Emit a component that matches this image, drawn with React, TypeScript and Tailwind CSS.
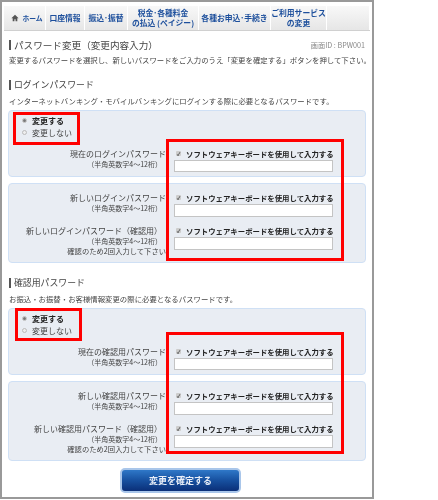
import React from "react";

const navItems = [
  { label: ["ホーム"], width: "w-[42px]", home: true },
  { label: ["口座情報"], width: "w-[39px]" },
  { label: ["振込･振替"], width: "w-[43px]" },
  { label: ["税金･各種料金", "の払込 (ペイジー)"], width: "w-[71px]" },
  { label: ["各種お申込･手続き"], width: "w-[72px]" },
  { label: ["ご利用サービス", "の変更"], width: "w-[56px]" },
  { label: [], width: "flex-1" },
];

function Heading({ children, large }: { children: React.ReactNode; large?: boolean }) {
  return (
    <div
      className={`ml-[1px] h-[10px] border-l-2 border-[#555] pl-[3px] leading-[10px] whitespace-nowrap text-[#444] ${
        large ? "text-[9.6px]" : "text-[8.9px]"
      }`}
    >
      {children}
    </div>
  );
}

function Description({ children, className }: { children: React.ReactNode; className: string }) {
  return (
    <p className={`ml-[1px] h-[10px] text-[7.4px] leading-[10px] whitespace-nowrap text-[#444] ${className}`}>
      {children}
    </p>
  );
}

function Radios() {
  return (
    <div className="flex flex-col gap-[3px] pl-[13px]">
      <label className="flex h-[9px] items-center gap-[5px] text-[8px] font-bold leading-[9px] text-[#222]">
        <span className="flex h-[5px] w-[5px] items-center justify-center rounded-full border border-[#bbb] bg-white">
          <span className="h-[3px] w-[3px] rounded-full bg-[#777]" />
        </span>
        変更する
      </label>
      <label className="flex h-[9px] items-center gap-[5px] text-[8px] leading-[9px] text-[#444]">
        <span className="h-[5px] w-[5px] rounded-full border border-[#bbb] bg-[#eee]" />
        変更しない
      </label>
    </div>
  );
}

function KeyboardInput({ tall }: { tall?: boolean }) {
  return (
    <div className="w-[160px]">
      <div className="flex h-[9px] items-center gap-[5px] pl-[2px] text-[7.4px] font-bold leading-[9px] whitespace-nowrap text-[#222]">
        <span className="flex h-[5px] w-[5px] items-center justify-center rounded-[1px] bg-[#ccc] text-[5px] leading-none text-[#444]">
          ✓
        </span>
        ソフトウェアキーボードを使用して入力する
      </div>
      <div className={`mt-[2px] w-[159px] border border-[#c4c4c4] bg-white ${tall ? "h-[13px]" : "h-[12px]"}`} />
    </div>
  );
}

function FieldRow({
  title,
  note,
  confirm,
  tall,
  className,
}: {
  title: string;
  note?: string;
  confirm?: boolean;
  tall?: boolean;
  className?: string;
}) {
  return (
    <div className={`flex items-start ${className ?? ""}`}>
      <div className="flex w-[157px] shrink-0 flex-col items-end text-[#444]">
        <div className={`h-[9px] text-[8px] leading-[9px] whitespace-nowrap ${confirm ? "pr-[4px]" : ""}`}>{title}</div>
        <div className="mt-[2px] h-[9px] pr-[4px] text-[7px] leading-[9px] whitespace-nowrap">（半角英数字4～12桁）</div>
        {note ? <div className="mt-[1px] h-[9px] text-[7.3px] leading-[9px] whitespace-nowrap">{note}</div> : null}
      </div>
      <div className="pl-[8px]">
        <KeyboardInput tall={tall} />
      </div>
    </div>
  );
}

function Panel({ children, className }: { children: React.ReactNode; className?: string }) {
  return (
    <section className={`w-[358px] rounded-[4px] border border-[#cfe0f5] bg-[#e9edf3] ${className ?? ""}`}>
      {children}
    </section>
  );
}

function RedBox({ className }: { className: string }) {
  return <div className={`pointer-events-none absolute border-[3px] border-[#ff0000] ${className}`} />;
}

export default function App() {
  return (
    <div className="h-[500px] w-[438px] bg-white font-['Noto_Sans_CJK_JP','Liberation_Sans',sans-serif]">
      <main className="relative box-border h-[499px] w-[374px] border-2 border-[#999] bg-white pl-[2px] pt-[4px] blur-[0.3px]">
        <nav className="flex h-[25px] w-[366px] border-b border-[#d0d0d0] bg-gradient-to-b from-[#f8f8f8] to-[#e6e6e6]">
          {navItems.map((item, i) => (
            <div
              key={i}
              className={`flex flex-col items-center justify-center border-r border-white text-center text-[7.8px] font-bold leading-[10px] whitespace-nowrap text-[#1d4f9c] ${item.width}`}
            >
              {item.home ? (
                <div className="flex items-center gap-[3px] pl-[5px]">
                  <svg viewBox="0 0 10 10" className="h-[8px] w-[8px]">
                    <path d="M5 1 0.5 5.2h1.6V9h2.2V6.6h1.4V9h2.2V5.2h1.6z" fill="#555" />
                  </svg>
                  <span className="text-[6.8px]">ホーム</span>
                </div>
              ) : (
                item.label.map((line) => <div key={line}>{line}</div>)
              )}
            </div>
          ))}
        </nav>

        <div className="w-[366px] pl-[4px]">
          <div className="flex items-center justify-between pr-[5px] pt-[9px]">
            <Heading large>パスワード変更（変更内容入力）</Heading>
            <span className="text-[7.2px] leading-[10px] text-[#888]">画面ID : BPW001</span>
          </div>
          <Description className="mt-[5px]">
            変更するパスワードを選択し、新しいパスワードをご入力のうえ「変更を確定する」ボタンを押して下さい。
          </Description>

          <div className="mt-[15px]">
            <Heading>ログインパスワード</Heading>
          </div>
          <Description className="mt-[6px]">
            インターネットバンキング・モバイルバンキングにログインする際に必要となるパスワードです。
          </Description>

          <Panel className="mt-[4px] h-[67px] pt-[5px]">
            <Radios />
            <FieldRow title="現在のログインパスワード" className="mt-[12px]" />
          </Panel>
          <Panel className="mt-[6px] h-[80px] pt-[9px]">
            <FieldRow title="新しいログインパスワード" tall />
            <FieldRow title="新しいログインパスワード（確認用）" note="確認のため2回入力して下さい" confirm tall className="mt-[9px]" />
          </Panel>

          <div className="mt-[15px]">
            <Heading>確認用パスワード</Heading>
          </div>
          <Description className="mt-[6px]">お振込・お振替・お客様情報変更の際に必要となるパスワードです。</Description>

          <Panel className="mt-[4px] h-[67px] pt-[5px]">
            <Radios />
            <FieldRow title="現在の確認用パスワード" className="mt-[12px]" />
          </Panel>
          <Panel className="mt-[6px] h-[80px] pt-[9px]">
            <FieldRow title="新しい確認用パスワード" tall />
            <FieldRow title="新しい確認用パスワード（確認用）" note="確認のため2回入力して下さい" confirm tall className="mt-[9px]" />
          </Panel>

          <div className="mt-[4px] pl-[112px]">
            <button className="h-[25px] w-[121px] rounded-[5px] border-2 border-[#a9c6ea] bg-gradient-to-b from-[#2f78c8] via-[#17509f] to-[#0b2f78] text-[9px] font-bold text-[#e8eef8]">
              変更を確定する
            </button>
          </div>
        </div>

        <RedBox className="left-[11px] top-[110px] h-[33px] w-[67px]" />
        <RedBox className="left-[164px] top-[137px] h-[122px] w-[178px]" />
        <RedBox className="left-[13px] top-[306px] h-[33px] w-[67px]" />
        <RedBox className="left-[164px] top-[330px] h-[122px] w-[178px]" />
      </main>
    </div>
  );
}
